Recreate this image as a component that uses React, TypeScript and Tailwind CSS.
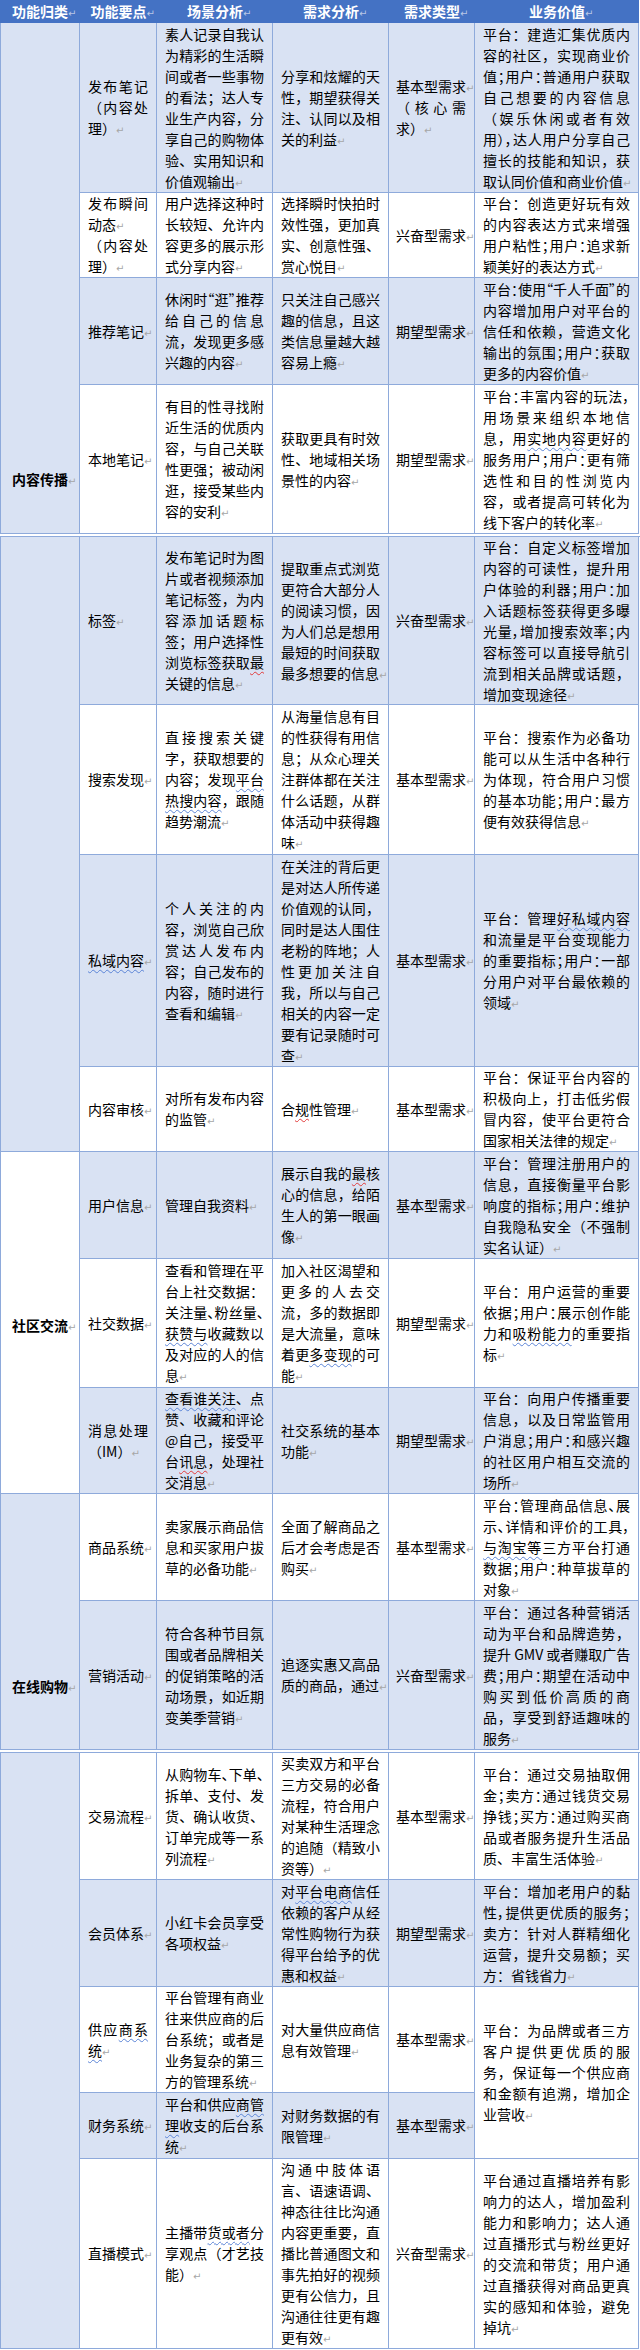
import React from "react";

type Cell = string | { t: string; span: number };
type Row = { bg: "b" | "w"; cells: Cell[] };
type Section = {
  label?: string;
  labelPad: string;
  col1Bg: string;
  rowsCls: string;
  spanCls: string;
  top?: boolean;
  rows: Row[];
};

const PAD = ["px-2", "px-2", "px-2", "pl-[7px] pr-[8px]", "px-2"];
const INNER = [60, 99, 99, 70, 147];
const BLUE = "bg-[#d9e2f3]";
const WHITE = "bg-white";

function Mark({ light }: { light?: boolean }) {
  return (
    <span
      className={`inline-block w-0 font-['DejaVu_Sans',sans-serif] text-[10px] font-normal leading-none ${
        light ? "text-[#b8c6e6]" : "text-[#a6a6a6]"
      }`}
    >
      ↵
    </span>
  );
}

function estWidth(s: string) {
  let w = 0;
  for (const ch of s.replace(/[\[\]{}]/g, "")) {
    w += ch.charCodeAt(0) < 0x2000 ? 8 : 14;
  }
  return w;
}

function Line({ text, inner }: { text: string; inner: number }) {
  const last = text.endsWith("↵");
  const body = last ? text.slice(0, -1) : text;
  const tight = estWidth(body) > inner;
  const parts = body.split(/(\[[^\]]*\]|\{[^}]*\})/).filter((p) => p.length > 0);
  let cls = "whitespace-nowrap";
  if (!last) cls += " text-justify [text-align-last:justify]";
  if (tight) cls += " [font-feature-settings:'palt']";
  return (
    <div className={cls}>
      {parts.map((p, i) =>
        p.startsWith("[") ? (
          <span
            key={i}
            className="underline decoration-wavy decoration-[#5b84d6] decoration-1 underline-offset-[3px]"
          >
            {p.slice(1, -1)}
          </span>
        ) : p.startsWith("{") ? (
          <span
            key={i}
            className="underline decoration-wavy decoration-[#e23b3b] decoration-1 underline-offset-[3px]"
          >
            {p.slice(1, -1)}
          </span>
        ) : (
          <React.Fragment key={i}>{p}</React.Fragment>
        )
      )}
      {last && <Mark />}
    </div>
  );
}

const sections: Section[] = [
  {
    label: "内容传播",
    labelPad: "pt-[446px]",
    col1Bg: BLUE,
    rowsCls: "grid-rows-[170px_85px_107px_149px]",
    spanCls: "row-span-4",
    rows: [
      {
        bg: "b",
        cells: [
          "发布笔记/（内容处/理）↵",
          "素人记录自我认/为精彩的生活瞬/间或者一些事物/的看法；达人专/业生产内容，分/享自己的购物体/验、实用知识和/价值观输出↵",
          "分享和炫耀的天/性，期望获得关/注、认同以及相/关的利益↵",
          "基本型需求↵/（核心需/求）↵",
          "平台：建造汇集优质内/容的社区，实现商业价/值；用户：普通用户获取/自己想要的内容信息/（娱乐休闲或者有效/用），达人用户分享自己/擅长的技能和知识，获/取认同价值和商业价值↵",
        ],
      },
      {
        bg: "w",
        cells: [
          "发布瞬间/动态↵/（内容处/理）↵",
          "用户选择这种时/长较短、允许内/容更多的展示形/式分享内容↵",
          "选择瞬时快拍时/效性强，更加真/实、创意性强、/赏心悦目↵",
          "兴奋型需求↵",
          "平台：创造更好玩有效/的内容表达方式来增强/用户粘性；用户：追求新/颖美好的表达方式↵",
        ],
      },
      {
        bg: "b",
        cells: [
          "推荐笔记↵",
          "休闲时“逛”推荐/给自己的信息/流，发现更多感/兴趣的内容↵",
          "只关注自己感兴/趣的信息，且这/类信息量越大越/容易上瘾↵",
          "期望型需求↵",
          "平台：使用“千人千面”的/内容增加用户对平台的/信任和依赖，营造文化/输出的氛围；用户：获取/更多的内容价值↵",
        ],
      },
      {
        bg: "w",
        cells: [
          "本地笔记↵",
          "有目的性寻找附/近生活的优质内/容，与自己关联/性更强；被动闲/逛，接受某些内/容的安利↵",
          "获取更具有时效/性、地域相关场/景性的内容↵",
          "期望型需求↵",
          "平台：丰富内容的玩法，/用场景来组织本地信/息，用[实地内容]更好的/服务用户；用户：更有筛/选性和目的性浏览内/容，或者提高可转化为/线下客户的转化率↵",
        ],
      },
    ],
  },
  {
    labelPad: "",
    col1Bg: BLUE,
    rowsCls: "grid-rows-[168px_150px_212px_85px]",
    spanCls: "row-span-4",
    top: true,
    rows: [
      {
        bg: "b",
        cells: [
          "标签↵",
          "发布笔记时为图/片或者视频添加/笔记标签，为内/容添加话题标/签；用户选择性/浏览标签获取{最}/关键的信息↵",
          "提取重点式浏览/更符合大部分人/的阅读习惯，因/为人们总是想用/最短的时间获取/最多想要的信息↵",
          "兴奋型需求↵",
          "平台：自定义标签增加/内容的可读性，提升用/户体验的利器；用户：加/入话题标签获得更多曝/光量，增加搜索效率；内/容标签可以直接导航引/流到相关品牌或话题，/增加变现途径↵",
        ],
      },
      {
        bg: "w",
        cells: [
          "搜索发现↵",
          "直接搜索关键/字，获取想要的/内容；发现[平台]/[热搜内容]，跟随/趋势潮流↵",
          "从海量信息有目/的性获得有用信/息；从众心理关/注群体都在关注/什么话题，从群/体活动中获得趣/味↵",
          "基本型需求↵",
          "平台：搜索作为必备功/能可以从生活中各种行/为体现，符合用户习惯/的基本功能；用户：最方/便有效获得信息↵",
        ],
      },
      {
        bg: "b",
        cells: [
          "[私域内容]↵",
          "个人关注的内/容，浏览自己欣/赏达人发布内/容；自己发布的/内容，随时进行/查看和编辑↵",
          "在关注的背后更/是对达人所传递/价值观的认同，/同时是达人围住/老粉的阵地；人/性更加关注自/我，所以与自己/相关的内容一定/要有记录随时可/查↵",
          "基本型需求↵",
          "平台：管理[好私域内容]/和流量是平台变现能力/的重要指标；用户：一部/分用户对平台最依赖的/领域↵",
        ],
      },
      {
        bg: "w",
        cells: [
          "内容审核↵",
          "对所有发布内容/的监管↵",
          "合{规}性管理↵",
          "基本型需求↵",
          "平台：保证平台内容的/积极向上，打击低劣假/冒内容，使平台更符合/国家相关法律的规定↵",
        ],
      },
    ],
  },
  {
    label: "社区交流",
    labelPad: "pt-[163px]",
    col1Bg: WHITE,
    rowsCls: "grid-rows-[107px_129px_106px]",
    spanCls: "row-span-3",
    rows: [
      {
        bg: "b",
        cells: [
          "用户信息↵",
          "管理自我资料↵",
          "展示自我的{最}核/心的信息，给陌/生人的第一眼画/像↵",
          "基本型需求↵",
          "平台：管理注册用户的/信息，直接衡量平台影/响度的指标；用户：维护/自我隐私安全（不强制/实名认证）↵",
        ],
      },
      {
        bg: "w",
        cells: [
          "社交数据↵",
          "查看和管理在平/台上社交数据：/关注量、粉丝量、/[获赞与]收藏数以/及对应的人的信/息↵",
          "加入社区渴望和/更多的人去交/流，多的数据即/是大流量，意味/着更[多变现]的可/能↵",
          "期望型需求↵",
          "平台：用户运营的重要/依据；用户：展示创作能/力和[吸粉能力]的重要指/标↵",
        ],
      },
      {
        bg: "b",
        cells: [
          "消息处理/（IM）↵",
          "[查看谁关注]、点/赞、收藏和评论/@自己，接受平/台{讯息}，处理社/交消息↵",
          "社交系统的基本/功能↵",
          "期望型需求↵",
          "平台：向用户传播重要/信息，以及日常监管用/户消息；用户：和感兴趣/的社区用户相互交流的/场所↵",
        ],
      },
    ],
  },
  {
    label: "在线购物",
    labelPad: "pt-[182px]",
    col1Bg: BLUE,
    rowsCls: "grid-rows-[107px_149px]",
    spanCls: "row-span-2",
    rows: [
      {
        bg: "w",
        cells: [
          "商品系统↵",
          "卖家展示商品信/息和买家用户拔/草的必备功能↵",
          "全面了解商品之/后才会考虑是否/购买↵",
          "基本型需求↵",
          "平台：管理商品信息、展/示、详情和评价的工具，/[与淘宝等]三方平台打通/数据；用户：种草拔草的/对象↵",
        ],
      },
      {
        bg: "b",
        cells: [
          "营销活动↵",
          "符合各种节目氛/围或者品牌相关/的促销策略的活/动场景，如近期/变美季营销↵",
          "追逐实惠又高品/质的商品，通过↵",
          "兴奋型需求↵",
          "平台：通过各种营销活/动为平台和品牌造势，/提升 GMV 或者赚取广告/费；用户：期望在活动中/购买到低价高质的商/品，享受到舒适趣味的/服务↵",
        ],
      },
    ],
  },
  {
    labelPad: "",
    col1Bg: BLUE,
    rowsCls: "grid-rows-[127px_107px_106px_66px_190px]",
    spanCls: "row-span-5",
    top: true,
    rows: [
      {
        bg: "w",
        cells: [
          "交易流程↵",
          "从购物车、下单、/拆单、支付、发/货、确认收货、/订单完成等一系/列流程↵",
          "买卖双方和平台/三方交易的必备/流程，符合用户/对某种生活理念/的追随（精致小/资等）↵",
          "基本型需求↵",
          "平台：通过交易抽取佣/金；卖方：通过钱货交易/挣钱；买方：通过购买商/品或者服务提升生活品/质、丰富生活体验↵",
        ],
      },
      {
        bg: "b",
        cells: [
          "会员体系↵",
          "小红卡会员享受/各项权益↵",
          "对[平台电商]信任/依赖的客户从经/常性购物行为获/得平台给予的优/惠和权益↵",
          "期望型需求↵",
          "平台：增加老用户的黏/性，提供更优质的服务；/卖方：针对人群精细化/运营，提升交易额；买/方：省钱省力↵",
        ],
      },
      {
        bg: "w",
        cells: [
          "供应[商系]/[统]↵",
          "平台管理有商业/往来供应商的后/台系统；或者是/业务复杂的第三/方的管理系统↵",
          "对大量供应商信/息有效管理↵",
          "基本型需求↵",
          {
            t: "平台：为品牌或者三方/客户提供更优质的服/务，保证每一个供应商/和金额有追溯，增加企/业营收↵",
            span: 2,
          },
        ],
      },
      {
        bg: "b",
        cells: [
          "财务系统↵",
          "平台和供应[商管]/[理]收支的后台系/统↵",
          "对财务数据的有/限管理↵",
          "基本型需求↵",
        ],
      },
      {
        bg: "w",
        cells: [
          "直播模式↵",
          "主播带[货或者]分/享观点（才艺技/能）↵",
          "沟通中肢体语/言、语速语调、/神态往往比沟通/内容更重要，直/播比普通图文和/事先拍好的视频/更有公信力，且/沟通往往更有趣/更有效↵",
          "兴奋型需求↵",
          "平台通过直播培养有影/响力的达人，增加盈利/能力和影响力；达人通/过直播形式与粉丝更好/的交流和带货；用户通/过直播获得对商品更真/实的感知和体验，避免/掉坑↵",
        ],
      },
    ],
  },
];

function SectionGrid({ s }: { s: Section }) {
  return (
    <div
      className={`grid grid-cols-[79px_77px_116px_116px_86px_164px] border-l border-[#8eaadb] ${s.rowsCls} ${
        s.top ? "border-t" : ""
      }`}
    >
      <div
        className={`${s.spanCls} ${s.col1Bg} ${s.labelPad} border-r border-b border-[#8eaadb] text-center font-bold`}
      >
        {s.label && (
          <div className="whitespace-nowrap">
            {s.label}
            <Mark />
          </div>
        )}
      </div>
      {s.rows.map((r, ri) =>
        r.cells.map((c, ci) => {
          const text = typeof c === "string" ? c : c.t;
          const span = typeof c === "string" ? "" : "row-span-2 bg-white";
          const bg = span ? "" : r.bg === "b" ? BLUE : WHITE;
          return (
            <div
              key={`${ri}-${ci}`}
              className={`${PAD[ci]} ${bg} ${span} flex flex-col justify-center border-r border-b border-[#8eaadb]`}
            >
              {text.split("/").map((l, li) => (
                <Line key={li} text={l} inner={INNER[ci]} />
              ))}
            </div>
          );
        })
      )}
    </div>
  );
}

const HEAD = [
  ["功能归类", "w-[80px]"],
  ["功能要点", "w-[77px]"],
  ["场景分析", "w-[116px]"],
  ["需求分析", "w-[116px]"],
  ["需求类型", "w-[86px]"],
  ["业务价值", "w-[164px]"],
];

export default function App() {
  return (
    <div className="w-[640px] h-[2350px] bg-white text-black text-[14px] leading-[21px] font-['Noto_Sans_CJK_SC','Noto_Sans',sans-serif]">
      <div className="flex h-[23px] w-[639px] bg-[#4472c4]">
        {HEAD.map(([t, w]) => (
          <div key={t} className={`${w} flex items-center justify-center font-bold text-white`}>
            <span className="whitespace-nowrap">
              {t}
              <Mark light />
            </span>
          </div>
        ))}
      </div>
      <SectionGrid s={sections[0]} />
      <div className="h-[2px]" />
      <SectionGrid s={sections[1]} />
      <SectionGrid s={sections[2]} />
      <SectionGrid s={sections[3]} />
      <div className="h-[2px]" />
      <SectionGrid s={sections[4]} />
    </div>
  );
}
